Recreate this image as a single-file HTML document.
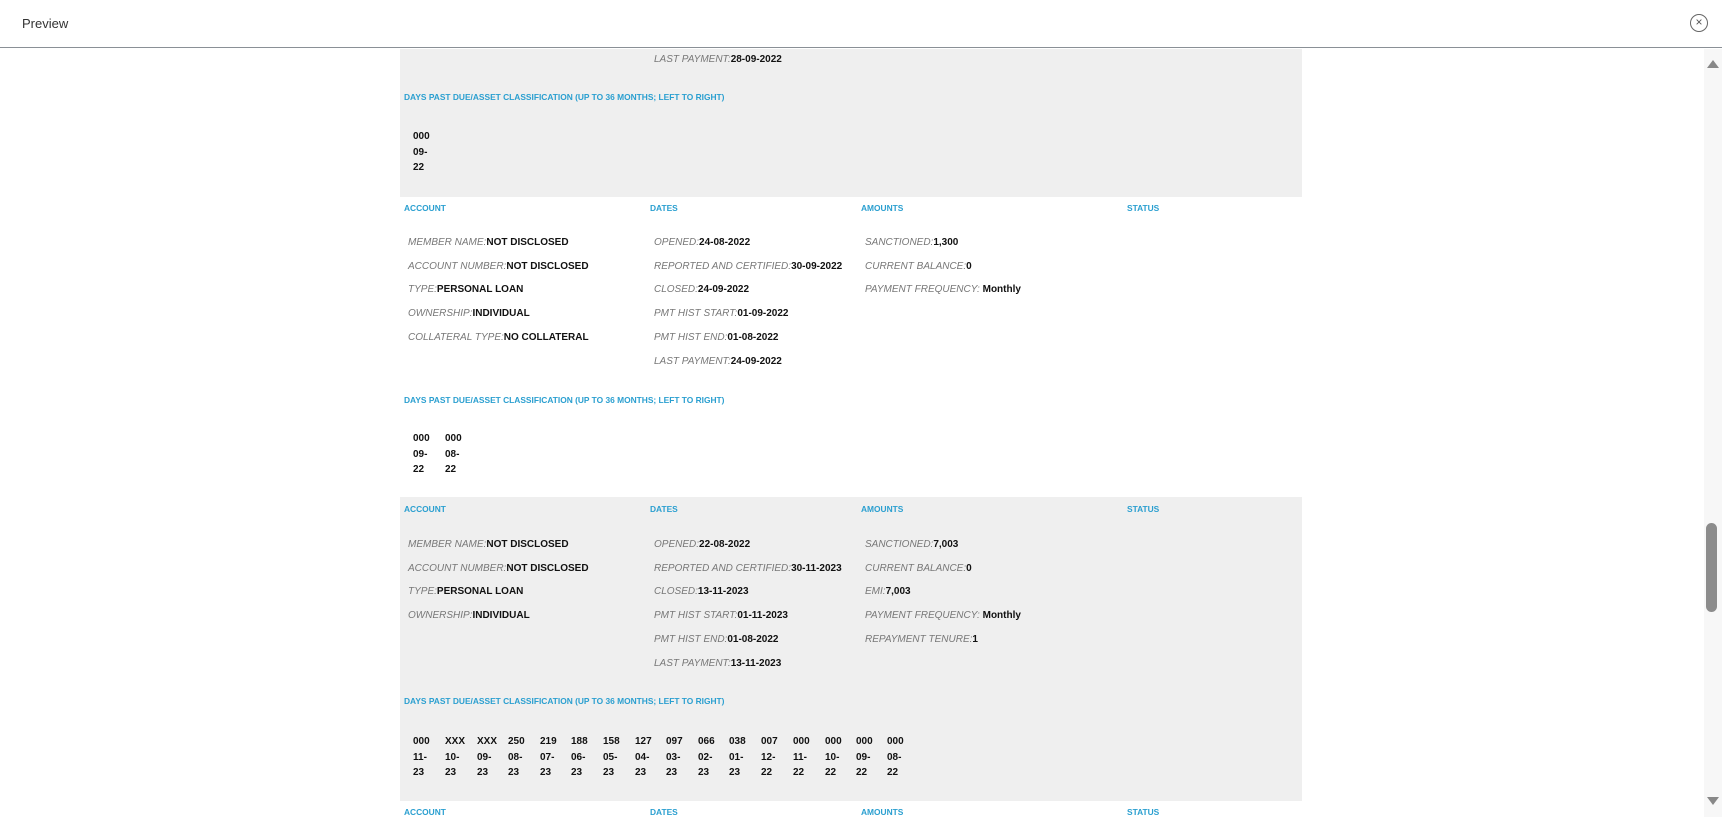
<!DOCTYPE html>
<html><head><meta charset="utf-8"><style>
*{margin:0;padding:0;box-sizing:border-box}
body{width:1722px;height:817px;overflow:hidden;background:#fff;font-family:"Liberation Sans",Arial,sans-serif;position:relative}
.hdr{position:absolute;left:0;top:0;width:1722px;height:48px;border-bottom:1px solid #8a9096;background:#fff}
.ttl{position:absolute;left:22px;top:16px;font-size:13px;color:#333}
.cls{position:absolute;left:1690px;top:14px;width:18px;height:18px;border:1.3px solid #666;border-radius:50%;color:#555;font-size:12px;line-height:15px;text-align:center}
.sb{position:absolute;left:1704px;top:49px;width:18px;height:768px;background:#f7f7f7}
.thumb{position:absolute;left:1706px;top:523px;width:11px;height:89px;background:#8c8c8c;border-radius:6px}
.g{position:absolute;left:400px;width:902px;background:#efefef}
.t{position:absolute;font-size:10px;line-height:14px;white-space:nowrap;transform:translateY(-7px)}
.h{color:#2a9fd0;font-weight:bold;font-size:8.4px}
.l{color:#777;font-style:italic}
.v{color:#111;font-weight:bold}
.d{position:absolute;font-size:10px;font-weight:bold;color:#111;line-height:15.5px;transform:translateY(-7px)}
</style></head><body>
<div class="hdr"><div class="ttl">Preview</div><div class="cls">×</div></div>
<div class="sb"></div>
<div style="position:absolute;left:1707px;top:60px;width:0;height:0;border-left:6px solid transparent;border-right:6px solid transparent;border-bottom:8px solid #888"></div>
<div style="position:absolute;left:1707px;top:797px;width:0;height:0;border-left:6px solid transparent;border-right:6px solid transparent;border-top:8px solid #888"></div>
<div class="thumb"></div>

<div class="g" style="top:49px;height:148px"></div>
<div class="g" style="top:497px;height:304px"></div>

<div class="t" style="left:654px;top:60px"><span class="l">LAST PAYMENT:</span><span class="v">28-09-2022</span></div>
<div class="t h" style="left:404px;top:97px">DAYS PAST DUE/ASSET CLASSIFICATION (UP TO 36 MONTHS; LEFT TO RIGHT)</div>
<div class="d" style="left:413px;top:136px">000<br>09-<br>22</div>

<div class="t h" style="left:404px;top:208px">ACCOUNT</div>
<div class="t h" style="left:650px;top:208px">DATES</div>
<div class="t h" style="left:861px;top:208px">AMOUNTS</div>
<div class="t h" style="left:1127px;top:208px">STATUS</div>
<div class="t" style="left:408px;top:243px"><span class="l">MEMBER NAME:</span><span class="v">NOT DISCLOSED</span></div>
<div class="t" style="left:408px;top:267px"><span class="l">ACCOUNT NUMBER:</span><span class="v">NOT DISCLOSED</span></div>
<div class="t" style="left:408px;top:290px"><span class="l">TYPE:</span><span class="v">PERSONAL LOAN</span></div>
<div class="t" style="left:408px;top:314px"><span class="l">OWNERSHIP:</span><span class="v">INDIVIDUAL</span></div>
<div class="t" style="left:408px;top:338px"><span class="l">COLLATERAL TYPE:</span><span class="v">NO COLLATERAL</span></div>
<div class="t" style="left:654px;top:243px"><span class="l">OPENED:</span><span class="v">24-08-2022</span></div>
<div class="t" style="left:654px;top:267px"><span class="l">REPORTED AND CERTIFIED:</span><span class="v">30-09-2022</span></div>
<div class="t" style="left:654px;top:290px"><span class="l">CLOSED:</span><span class="v">24-09-2022</span></div>
<div class="t" style="left:654px;top:314px"><span class="l">PMT HIST START:</span><span class="v">01-09-2022</span></div>
<div class="t" style="left:654px;top:338px"><span class="l">PMT HIST END:</span><span class="v">01-08-2022</span></div>
<div class="t" style="left:654px;top:362px"><span class="l">LAST PAYMENT:</span><span class="v">24-09-2022</span></div>
<div class="t" style="left:865px;top:243px"><span class="l">SANCTIONED:</span><span class="v">1,300</span></div>
<div class="t" style="left:865px;top:267px"><span class="l">CURRENT BALANCE:</span><span class="v">0</span></div>
<div class="t" style="left:865px;top:290px"><span class="l">PAYMENT FREQUENCY: </span><span class="v">Monthly</span></div>
<div class="t h" style="left:404px;top:400px">DAYS PAST DUE/ASSET CLASSIFICATION (UP TO 36 MONTHS; LEFT TO RIGHT)</div>
<div class="d" style="left:413px;top:438px">000<br>09-<br>22</div>
<div class="d" style="left:445px;top:438px">000<br>08-<br>22</div>

<div class="t h" style="left:404px;top:509px">ACCOUNT</div>
<div class="t h" style="left:650px;top:509px">DATES</div>
<div class="t h" style="left:861px;top:509px">AMOUNTS</div>
<div class="t h" style="left:1127px;top:509px">STATUS</div>
<div class="t" style="left:408px;top:545px"><span class="l">MEMBER NAME:</span><span class="v">NOT DISCLOSED</span></div>
<div class="t" style="left:408px;top:569px"><span class="l">ACCOUNT NUMBER:</span><span class="v">NOT DISCLOSED</span></div>
<div class="t" style="left:408px;top:592px"><span class="l">TYPE:</span><span class="v">PERSONAL LOAN</span></div>
<div class="t" style="left:408px;top:616px"><span class="l">OWNERSHIP:</span><span class="v">INDIVIDUAL</span></div>
<div class="t" style="left:654px;top:545px"><span class="l">OPENED:</span><span class="v">22-08-2022</span></div>
<div class="t" style="left:654px;top:569px"><span class="l">REPORTED AND CERTIFIED:</span><span class="v">30-11-2023</span></div>
<div class="t" style="left:654px;top:592px"><span class="l">CLOSED:</span><span class="v">13-11-2023</span></div>
<div class="t" style="left:654px;top:616px"><span class="l">PMT HIST START:</span><span class="v">01-11-2023</span></div>
<div class="t" style="left:654px;top:640px"><span class="l">PMT HIST END:</span><span class="v">01-08-2022</span></div>
<div class="t" style="left:654px;top:664px"><span class="l">LAST PAYMENT:</span><span class="v">13-11-2023</span></div>
<div class="t" style="left:865px;top:545px"><span class="l">SANCTIONED:</span><span class="v">7,003</span></div>
<div class="t" style="left:865px;top:569px"><span class="l">CURRENT BALANCE:</span><span class="v">0</span></div>
<div class="t" style="left:865px;top:592px"><span class="l">EMI:</span><span class="v">7,003</span></div>
<div class="t" style="left:865px;top:616px"><span class="l">PAYMENT FREQUENCY: </span><span class="v">Monthly</span></div>
<div class="t" style="left:865px;top:640px"><span class="l">REPAYMENT TENURE:</span><span class="v">1</span></div>
<div class="t h" style="left:404px;top:701px">DAYS PAST DUE/ASSET CLASSIFICATION (UP TO 36 MONTHS; LEFT TO RIGHT)</div>
<div class="d" style="left:413px;top:741px">000<br>11-<br>23</div>
<div class="d" style="left:445px;top:741px">XXX<br>10-<br>23</div>
<div class="d" style="left:477px;top:741px">XXX<br>09-<br>23</div>
<div class="d" style="left:508px;top:741px">250<br>08-<br>23</div>
<div class="d" style="left:540px;top:741px">219<br>07-<br>23</div>
<div class="d" style="left:571px;top:741px">188<br>06-<br>23</div>
<div class="d" style="left:603px;top:741px">158<br>05-<br>23</div>
<div class="d" style="left:635px;top:741px">127<br>04-<br>23</div>
<div class="d" style="left:666px;top:741px">097<br>03-<br>23</div>
<div class="d" style="left:698px;top:741px">066<br>02-<br>23</div>
<div class="d" style="left:729px;top:741px">038<br>01-<br>23</div>
<div class="d" style="left:761px;top:741px">007<br>12-<br>22</div>
<div class="d" style="left:793px;top:741px">000<br>11-<br>22</div>
<div class="d" style="left:825px;top:741px">000<br>10-<br>22</div>
<div class="d" style="left:856px;top:741px">000<br>09-<br>22</div>
<div class="d" style="left:887px;top:741px">000<br>08-<br>22</div>

<div class="t h" style="left:404px;top:812px">ACCOUNT</div>
<div class="t h" style="left:650px;top:812px">DATES</div>
<div class="t h" style="left:861px;top:812px">AMOUNTS</div>
<div class="t h" style="left:1127px;top:812px">STATUS</div>
</body></html>
